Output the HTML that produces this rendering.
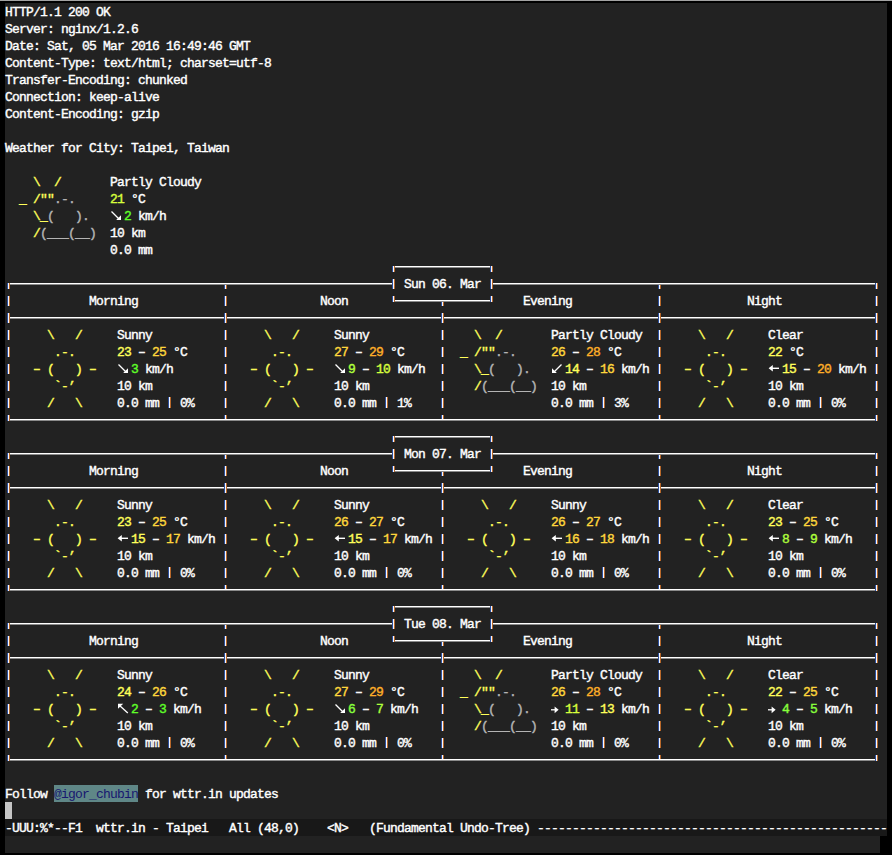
<!DOCTYPE html>
<html><head><meta charset="utf-8"><style>
html,body{margin:0;padding:0;background:#000;}
#t{position:relative;width:892px;height:855px;background:#000;overflow:hidden}
#bar{position:absolute;left:0;top:0;width:892px;height:1px;background:#a3a3a3}
#bg{position:absolute;left:5px;top:3px;width:882px;height:833px;background:#222222}
#mb{position:absolute;left:5px;top:836px;width:875px;height:17px;background:#222222}
#ml{position:absolute;left:5px;top:819px;width:882px;height:17px;background:#181818}
#cur{position:absolute;left:5px;top:802px;width:7px;height:17px;background:#c4c4c4}
#hl{position:absolute;left:54px;top:785px;width:84px;height:17px;background:#5f8787}
s{position:absolute;text-decoration:none;white-space:pre;font-family:"Liberation Mono",monospace;font-size:13px;letter-spacing:-0.8px;line-height:17px;color:#ffffff;margin-top:1px;-webkit-text-stroke-width:0.4px}
s.lk{color:#181870;-webkit-text-stroke-width:0}
i{position:absolute;display:block}
svg.ar{position:absolute}
</style></head><body><div id="t">
<div id="bar"></div><div id="bg"></div><div id="mb"></div><div id="ml"></div><div id="cur"></div><div id="hl"></div>
<i style="left:168px;top:397px;width:1px;height:11px;background:#2c4f9e"></i><i style="left:169px;top:397px;width:1px;height:11px;background:#f4f8ff"></i><i style="left:170px;top:397px;width:1px;height:11px;background:#b8682a"></i><i style="left:385px;top:397px;width:1px;height:11px;background:#2c4f9e"></i><i style="left:386px;top:397px;width:1px;height:11px;background:#f4f8ff"></i><i style="left:387px;top:397px;width:1px;height:11px;background:#b8682a"></i><i style="left:602px;top:397px;width:1px;height:11px;background:#2c4f9e"></i><i style="left:603px;top:397px;width:1px;height:11px;background:#f4f8ff"></i><i style="left:604px;top:397px;width:1px;height:11px;background:#b8682a"></i><i style="left:819px;top:397px;width:1px;height:11px;background:#2c4f9e"></i><i style="left:820px;top:397px;width:1px;height:11px;background:#f4f8ff"></i><i style="left:821px;top:397px;width:1px;height:11px;background:#b8682a"></i><i style="left:168px;top:567px;width:1px;height:11px;background:#2c4f9e"></i><i style="left:169px;top:567px;width:1px;height:11px;background:#f4f8ff"></i><i style="left:170px;top:567px;width:1px;height:11px;background:#b8682a"></i><i style="left:385px;top:567px;width:1px;height:11px;background:#2c4f9e"></i><i style="left:386px;top:567px;width:1px;height:11px;background:#f4f8ff"></i><i style="left:387px;top:567px;width:1px;height:11px;background:#b8682a"></i><i style="left:602px;top:567px;width:1px;height:11px;background:#2c4f9e"></i><i style="left:603px;top:567px;width:1px;height:11px;background:#f4f8ff"></i><i style="left:604px;top:567px;width:1px;height:11px;background:#b8682a"></i><i style="left:819px;top:567px;width:1px;height:11px;background:#2c4f9e"></i><i style="left:820px;top:567px;width:1px;height:11px;background:#f4f8ff"></i><i style="left:821px;top:567px;width:1px;height:11px;background:#b8682a"></i><i style="left:168px;top:737px;width:1px;height:11px;background:#2c4f9e"></i><i style="left:169px;top:737px;width:1px;height:11px;background:#f4f8ff"></i><i style="left:170px;top:737px;width:1px;height:11px;background:#b8682a"></i><i style="left:385px;top:737px;width:1px;height:11px;background:#2c4f9e"></i><i style="left:386px;top:737px;width:1px;height:11px;background:#f4f8ff"></i><i style="left:387px;top:737px;width:1px;height:11px;background:#b8682a"></i><i style="left:602px;top:737px;width:1px;height:11px;background:#2c4f9e"></i><i style="left:603px;top:737px;width:1px;height:11px;background:#f4f8ff"></i><i style="left:604px;top:737px;width:1px;height:11px;background:#b8682a"></i><i style="left:819px;top:737px;width:1px;height:11px;background:#2c4f9e"></i><i style="left:820px;top:737px;width:1px;height:11px;background:#f4f8ff"></i><i style="left:821px;top:737px;width:1px;height:11px;background:#b8682a"></i><i style="left:393px;top:266px;width:99px;height:1px;background:#ffffff"></i><i style="left:393px;top:267px;width:99px;height:1px;background:#8a8a8a"></i><i style="left:8px;top:283px;width:386px;height:1px;background:#ffffff"></i><i style="left:8px;top:284px;width:386px;height:1px;background:#8a8a8a"></i><i style="left:491px;top:283px;width:386px;height:1px;background:#ffffff"></i><i style="left:491px;top:284px;width:386px;height:1px;background:#8a8a8a"></i><i style="left:393px;top:300px;width:99px;height:1px;background:#ffffff"></i><i style="left:393px;top:301px;width:99px;height:1px;background:#8a8a8a"></i><i style="left:8px;top:317px;width:869px;height:1px;background:#ffffff"></i><i style="left:8px;top:318px;width:869px;height:1px;background:#8a8a8a"></i><i style="left:8px;top:419px;width:869px;height:1px;background:#ffffff"></i><i style="left:8px;top:420px;width:869px;height:1px;background:#8a8a8a"></i><i style="left:393px;top:436px;width:99px;height:1px;background:#ffffff"></i><i style="left:393px;top:437px;width:99px;height:1px;background:#8a8a8a"></i><i style="left:8px;top:453px;width:386px;height:1px;background:#ffffff"></i><i style="left:8px;top:454px;width:386px;height:1px;background:#8a8a8a"></i><i style="left:491px;top:453px;width:386px;height:1px;background:#ffffff"></i><i style="left:491px;top:454px;width:386px;height:1px;background:#8a8a8a"></i><i style="left:393px;top:470px;width:99px;height:1px;background:#ffffff"></i><i style="left:393px;top:471px;width:99px;height:1px;background:#8a8a8a"></i><i style="left:8px;top:487px;width:869px;height:1px;background:#ffffff"></i><i style="left:8px;top:488px;width:869px;height:1px;background:#8a8a8a"></i><i style="left:8px;top:589px;width:869px;height:1px;background:#ffffff"></i><i style="left:8px;top:590px;width:869px;height:1px;background:#8a8a8a"></i><i style="left:393px;top:606px;width:99px;height:1px;background:#ffffff"></i><i style="left:393px;top:607px;width:99px;height:1px;background:#8a8a8a"></i><i style="left:8px;top:623px;width:386px;height:1px;background:#ffffff"></i><i style="left:8px;top:624px;width:386px;height:1px;background:#8a8a8a"></i><i style="left:491px;top:623px;width:386px;height:1px;background:#ffffff"></i><i style="left:491px;top:624px;width:386px;height:1px;background:#8a8a8a"></i><i style="left:393px;top:640px;width:99px;height:1px;background:#ffffff"></i><i style="left:393px;top:641px;width:99px;height:1px;background:#8a8a8a"></i><i style="left:8px;top:657px;width:869px;height:1px;background:#ffffff"></i><i style="left:8px;top:658px;width:869px;height:1px;background:#8a8a8a"></i><i style="left:8px;top:759px;width:869px;height:1px;background:#ffffff"></i><i style="left:8px;top:760px;width:869px;height:1px;background:#8a8a8a"></i><i style="left:392px;top:266px;width:1px;height:6px;background:#2c4f9e"></i><i style="left:393px;top:266px;width:1px;height:6px;background:#f4f8ff"></i><i style="left:394px;top:266px;width:1px;height:6px;background:#b8682a"></i><i style="left:490px;top:266px;width:1px;height:6px;background:#2c4f9e"></i><i style="left:491px;top:266px;width:1px;height:6px;background:#f4f8ff"></i><i style="left:492px;top:266px;width:1px;height:6px;background:#b8682a"></i><i style="left:7px;top:283px;width:1px;height:6px;background:#2c4f9e"></i><i style="left:8px;top:283px;width:1px;height:6px;background:#f4f8ff"></i><i style="left:9px;top:283px;width:1px;height:6px;background:#b8682a"></i><i style="left:224px;top:285px;width:1px;height:4px;background:#2c4f9e"></i><i style="left:225px;top:285px;width:1px;height:4px;background:#f4f8ff"></i><i style="left:226px;top:285px;width:1px;height:4px;background:#b8682a"></i><i style="left:392px;top:279px;width:1px;height:10px;background:#2c4f9e"></i><i style="left:393px;top:279px;width:1px;height:10px;background:#f4f8ff"></i><i style="left:394px;top:279px;width:1px;height:10px;background:#b8682a"></i><i style="left:490px;top:279px;width:1px;height:10px;background:#2c4f9e"></i><i style="left:491px;top:279px;width:1px;height:10px;background:#f4f8ff"></i><i style="left:492px;top:279px;width:1px;height:10px;background:#b8682a"></i><i style="left:658px;top:285px;width:1px;height:4px;background:#2c4f9e"></i><i style="left:659px;top:285px;width:1px;height:4px;background:#f4f8ff"></i><i style="left:660px;top:285px;width:1px;height:4px;background:#b8682a"></i><i style="left:875px;top:283px;width:1px;height:6px;background:#2c4f9e"></i><i style="left:876px;top:283px;width:1px;height:6px;background:#f4f8ff"></i><i style="left:877px;top:283px;width:1px;height:6px;background:#b8682a"></i><i style="left:7px;top:296px;width:1px;height:10px;background:#2c4f9e"></i><i style="left:8px;top:296px;width:1px;height:10px;background:#f4f8ff"></i><i style="left:9px;top:296px;width:1px;height:10px;background:#b8682a"></i><i style="left:224px;top:296px;width:1px;height:10px;background:#2c4f9e"></i><i style="left:225px;top:296px;width:1px;height:10px;background:#f4f8ff"></i><i style="left:226px;top:296px;width:1px;height:10px;background:#b8682a"></i><i style="left:392px;top:296px;width:1px;height:6px;background:#2c4f9e"></i><i style="left:393px;top:296px;width:1px;height:6px;background:#f4f8ff"></i><i style="left:394px;top:296px;width:1px;height:6px;background:#b8682a"></i><i style="left:441px;top:302px;width:1px;height:4px;background:#2c4f9e"></i><i style="left:442px;top:302px;width:1px;height:4px;background:#f4f8ff"></i><i style="left:443px;top:302px;width:1px;height:4px;background:#b8682a"></i><i style="left:490px;top:296px;width:1px;height:6px;background:#2c4f9e"></i><i style="left:491px;top:296px;width:1px;height:6px;background:#f4f8ff"></i><i style="left:492px;top:296px;width:1px;height:6px;background:#b8682a"></i><i style="left:658px;top:296px;width:1px;height:10px;background:#2c4f9e"></i><i style="left:659px;top:296px;width:1px;height:10px;background:#f4f8ff"></i><i style="left:660px;top:296px;width:1px;height:10px;background:#b8682a"></i><i style="left:875px;top:296px;width:1px;height:10px;background:#2c4f9e"></i><i style="left:876px;top:296px;width:1px;height:10px;background:#f4f8ff"></i><i style="left:877px;top:296px;width:1px;height:10px;background:#b8682a"></i><i style="left:7px;top:313px;width:1px;height:10px;background:#2c4f9e"></i><i style="left:8px;top:313px;width:1px;height:10px;background:#f4f8ff"></i><i style="left:9px;top:313px;width:1px;height:10px;background:#b8682a"></i><i style="left:224px;top:313px;width:1px;height:10px;background:#2c4f9e"></i><i style="left:225px;top:313px;width:1px;height:10px;background:#f4f8ff"></i><i style="left:226px;top:313px;width:1px;height:10px;background:#b8682a"></i><i style="left:441px;top:313px;width:1px;height:10px;background:#2c4f9e"></i><i style="left:442px;top:313px;width:1px;height:10px;background:#f4f8ff"></i><i style="left:443px;top:313px;width:1px;height:10px;background:#b8682a"></i><i style="left:658px;top:313px;width:1px;height:10px;background:#2c4f9e"></i><i style="left:659px;top:313px;width:1px;height:10px;background:#f4f8ff"></i><i style="left:660px;top:313px;width:1px;height:10px;background:#b8682a"></i><i style="left:875px;top:313px;width:1px;height:10px;background:#2c4f9e"></i><i style="left:876px;top:313px;width:1px;height:10px;background:#f4f8ff"></i><i style="left:877px;top:313px;width:1px;height:10px;background:#b8682a"></i><i style="left:7px;top:330px;width:1px;height:10px;background:#2c4f9e"></i><i style="left:8px;top:330px;width:1px;height:10px;background:#f4f8ff"></i><i style="left:9px;top:330px;width:1px;height:10px;background:#b8682a"></i><i style="left:224px;top:330px;width:1px;height:10px;background:#2c4f9e"></i><i style="left:225px;top:330px;width:1px;height:10px;background:#f4f8ff"></i><i style="left:226px;top:330px;width:1px;height:10px;background:#b8682a"></i><i style="left:441px;top:330px;width:1px;height:10px;background:#2c4f9e"></i><i style="left:442px;top:330px;width:1px;height:10px;background:#f4f8ff"></i><i style="left:443px;top:330px;width:1px;height:10px;background:#b8682a"></i><i style="left:658px;top:330px;width:1px;height:10px;background:#2c4f9e"></i><i style="left:659px;top:330px;width:1px;height:10px;background:#f4f8ff"></i><i style="left:660px;top:330px;width:1px;height:10px;background:#b8682a"></i><i style="left:875px;top:330px;width:1px;height:10px;background:#2c4f9e"></i><i style="left:876px;top:330px;width:1px;height:10px;background:#f4f8ff"></i><i style="left:877px;top:330px;width:1px;height:10px;background:#b8682a"></i><i style="left:7px;top:347px;width:1px;height:10px;background:#2c4f9e"></i><i style="left:8px;top:347px;width:1px;height:10px;background:#f4f8ff"></i><i style="left:9px;top:347px;width:1px;height:10px;background:#b8682a"></i><i style="left:224px;top:347px;width:1px;height:10px;background:#2c4f9e"></i><i style="left:225px;top:347px;width:1px;height:10px;background:#f4f8ff"></i><i style="left:226px;top:347px;width:1px;height:10px;background:#b8682a"></i><i style="left:441px;top:347px;width:1px;height:10px;background:#2c4f9e"></i><i style="left:442px;top:347px;width:1px;height:10px;background:#f4f8ff"></i><i style="left:443px;top:347px;width:1px;height:10px;background:#b8682a"></i><i style="left:658px;top:347px;width:1px;height:10px;background:#2c4f9e"></i><i style="left:659px;top:347px;width:1px;height:10px;background:#f4f8ff"></i><i style="left:660px;top:347px;width:1px;height:10px;background:#b8682a"></i><i style="left:875px;top:347px;width:1px;height:10px;background:#2c4f9e"></i><i style="left:876px;top:347px;width:1px;height:10px;background:#f4f8ff"></i><i style="left:877px;top:347px;width:1px;height:10px;background:#b8682a"></i><i style="left:7px;top:364px;width:1px;height:10px;background:#2c4f9e"></i><i style="left:8px;top:364px;width:1px;height:10px;background:#f4f8ff"></i><i style="left:9px;top:364px;width:1px;height:10px;background:#b8682a"></i><i style="left:224px;top:364px;width:1px;height:10px;background:#2c4f9e"></i><i style="left:225px;top:364px;width:1px;height:10px;background:#f4f8ff"></i><i style="left:226px;top:364px;width:1px;height:10px;background:#b8682a"></i><i style="left:441px;top:364px;width:1px;height:10px;background:#2c4f9e"></i><i style="left:442px;top:364px;width:1px;height:10px;background:#f4f8ff"></i><i style="left:443px;top:364px;width:1px;height:10px;background:#b8682a"></i><i style="left:658px;top:364px;width:1px;height:10px;background:#2c4f9e"></i><i style="left:659px;top:364px;width:1px;height:10px;background:#f4f8ff"></i><i style="left:660px;top:364px;width:1px;height:10px;background:#b8682a"></i><i style="left:875px;top:364px;width:1px;height:10px;background:#2c4f9e"></i><i style="left:876px;top:364px;width:1px;height:10px;background:#f4f8ff"></i><i style="left:877px;top:364px;width:1px;height:10px;background:#b8682a"></i><i style="left:7px;top:381px;width:1px;height:10px;background:#2c4f9e"></i><i style="left:8px;top:381px;width:1px;height:10px;background:#f4f8ff"></i><i style="left:9px;top:381px;width:1px;height:10px;background:#b8682a"></i><i style="left:224px;top:381px;width:1px;height:10px;background:#2c4f9e"></i><i style="left:225px;top:381px;width:1px;height:10px;background:#f4f8ff"></i><i style="left:226px;top:381px;width:1px;height:10px;background:#b8682a"></i><i style="left:441px;top:381px;width:1px;height:10px;background:#2c4f9e"></i><i style="left:442px;top:381px;width:1px;height:10px;background:#f4f8ff"></i><i style="left:443px;top:381px;width:1px;height:10px;background:#b8682a"></i><i style="left:658px;top:381px;width:1px;height:10px;background:#2c4f9e"></i><i style="left:659px;top:381px;width:1px;height:10px;background:#f4f8ff"></i><i style="left:660px;top:381px;width:1px;height:10px;background:#b8682a"></i><i style="left:875px;top:381px;width:1px;height:10px;background:#2c4f9e"></i><i style="left:876px;top:381px;width:1px;height:10px;background:#f4f8ff"></i><i style="left:877px;top:381px;width:1px;height:10px;background:#b8682a"></i><i style="left:7px;top:398px;width:1px;height:10px;background:#2c4f9e"></i><i style="left:8px;top:398px;width:1px;height:10px;background:#f4f8ff"></i><i style="left:9px;top:398px;width:1px;height:10px;background:#b8682a"></i><i style="left:224px;top:398px;width:1px;height:10px;background:#2c4f9e"></i><i style="left:225px;top:398px;width:1px;height:10px;background:#f4f8ff"></i><i style="left:226px;top:398px;width:1px;height:10px;background:#b8682a"></i><i style="left:441px;top:398px;width:1px;height:10px;background:#2c4f9e"></i><i style="left:442px;top:398px;width:1px;height:10px;background:#f4f8ff"></i><i style="left:443px;top:398px;width:1px;height:10px;background:#b8682a"></i><i style="left:658px;top:398px;width:1px;height:10px;background:#2c4f9e"></i><i style="left:659px;top:398px;width:1px;height:10px;background:#f4f8ff"></i><i style="left:660px;top:398px;width:1px;height:10px;background:#b8682a"></i><i style="left:875px;top:398px;width:1px;height:10px;background:#2c4f9e"></i><i style="left:876px;top:398px;width:1px;height:10px;background:#f4f8ff"></i><i style="left:877px;top:398px;width:1px;height:10px;background:#b8682a"></i><i style="left:7px;top:415px;width:1px;height:6px;background:#2c4f9e"></i><i style="left:8px;top:415px;width:1px;height:6px;background:#f4f8ff"></i><i style="left:9px;top:415px;width:1px;height:6px;background:#b8682a"></i><i style="left:224px;top:415px;width:1px;height:4px;background:#2c4f9e"></i><i style="left:225px;top:415px;width:1px;height:4px;background:#f4f8ff"></i><i style="left:226px;top:415px;width:1px;height:4px;background:#b8682a"></i><i style="left:441px;top:415px;width:1px;height:4px;background:#2c4f9e"></i><i style="left:442px;top:415px;width:1px;height:4px;background:#f4f8ff"></i><i style="left:443px;top:415px;width:1px;height:4px;background:#b8682a"></i><i style="left:658px;top:415px;width:1px;height:4px;background:#2c4f9e"></i><i style="left:659px;top:415px;width:1px;height:4px;background:#f4f8ff"></i><i style="left:660px;top:415px;width:1px;height:4px;background:#b8682a"></i><i style="left:875px;top:415px;width:1px;height:6px;background:#2c4f9e"></i><i style="left:876px;top:415px;width:1px;height:6px;background:#f4f8ff"></i><i style="left:877px;top:415px;width:1px;height:6px;background:#b8682a"></i><i style="left:392px;top:436px;width:1px;height:6px;background:#2c4f9e"></i><i style="left:393px;top:436px;width:1px;height:6px;background:#f4f8ff"></i><i style="left:394px;top:436px;width:1px;height:6px;background:#b8682a"></i><i style="left:490px;top:436px;width:1px;height:6px;background:#2c4f9e"></i><i style="left:491px;top:436px;width:1px;height:6px;background:#f4f8ff"></i><i style="left:492px;top:436px;width:1px;height:6px;background:#b8682a"></i><i style="left:7px;top:453px;width:1px;height:6px;background:#2c4f9e"></i><i style="left:8px;top:453px;width:1px;height:6px;background:#f4f8ff"></i><i style="left:9px;top:453px;width:1px;height:6px;background:#b8682a"></i><i style="left:224px;top:455px;width:1px;height:4px;background:#2c4f9e"></i><i style="left:225px;top:455px;width:1px;height:4px;background:#f4f8ff"></i><i style="left:226px;top:455px;width:1px;height:4px;background:#b8682a"></i><i style="left:392px;top:449px;width:1px;height:10px;background:#2c4f9e"></i><i style="left:393px;top:449px;width:1px;height:10px;background:#f4f8ff"></i><i style="left:394px;top:449px;width:1px;height:10px;background:#b8682a"></i><i style="left:490px;top:449px;width:1px;height:10px;background:#2c4f9e"></i><i style="left:491px;top:449px;width:1px;height:10px;background:#f4f8ff"></i><i style="left:492px;top:449px;width:1px;height:10px;background:#b8682a"></i><i style="left:658px;top:455px;width:1px;height:4px;background:#2c4f9e"></i><i style="left:659px;top:455px;width:1px;height:4px;background:#f4f8ff"></i><i style="left:660px;top:455px;width:1px;height:4px;background:#b8682a"></i><i style="left:875px;top:453px;width:1px;height:6px;background:#2c4f9e"></i><i style="left:876px;top:453px;width:1px;height:6px;background:#f4f8ff"></i><i style="left:877px;top:453px;width:1px;height:6px;background:#b8682a"></i><i style="left:7px;top:466px;width:1px;height:10px;background:#2c4f9e"></i><i style="left:8px;top:466px;width:1px;height:10px;background:#f4f8ff"></i><i style="left:9px;top:466px;width:1px;height:10px;background:#b8682a"></i><i style="left:224px;top:466px;width:1px;height:10px;background:#2c4f9e"></i><i style="left:225px;top:466px;width:1px;height:10px;background:#f4f8ff"></i><i style="left:226px;top:466px;width:1px;height:10px;background:#b8682a"></i><i style="left:392px;top:466px;width:1px;height:6px;background:#2c4f9e"></i><i style="left:393px;top:466px;width:1px;height:6px;background:#f4f8ff"></i><i style="left:394px;top:466px;width:1px;height:6px;background:#b8682a"></i><i style="left:441px;top:472px;width:1px;height:4px;background:#2c4f9e"></i><i style="left:442px;top:472px;width:1px;height:4px;background:#f4f8ff"></i><i style="left:443px;top:472px;width:1px;height:4px;background:#b8682a"></i><i style="left:490px;top:466px;width:1px;height:6px;background:#2c4f9e"></i><i style="left:491px;top:466px;width:1px;height:6px;background:#f4f8ff"></i><i style="left:492px;top:466px;width:1px;height:6px;background:#b8682a"></i><i style="left:658px;top:466px;width:1px;height:10px;background:#2c4f9e"></i><i style="left:659px;top:466px;width:1px;height:10px;background:#f4f8ff"></i><i style="left:660px;top:466px;width:1px;height:10px;background:#b8682a"></i><i style="left:875px;top:466px;width:1px;height:10px;background:#2c4f9e"></i><i style="left:876px;top:466px;width:1px;height:10px;background:#f4f8ff"></i><i style="left:877px;top:466px;width:1px;height:10px;background:#b8682a"></i><i style="left:7px;top:483px;width:1px;height:10px;background:#2c4f9e"></i><i style="left:8px;top:483px;width:1px;height:10px;background:#f4f8ff"></i><i style="left:9px;top:483px;width:1px;height:10px;background:#b8682a"></i><i style="left:224px;top:483px;width:1px;height:10px;background:#2c4f9e"></i><i style="left:225px;top:483px;width:1px;height:10px;background:#f4f8ff"></i><i style="left:226px;top:483px;width:1px;height:10px;background:#b8682a"></i><i style="left:441px;top:483px;width:1px;height:10px;background:#2c4f9e"></i><i style="left:442px;top:483px;width:1px;height:10px;background:#f4f8ff"></i><i style="left:443px;top:483px;width:1px;height:10px;background:#b8682a"></i><i style="left:658px;top:483px;width:1px;height:10px;background:#2c4f9e"></i><i style="left:659px;top:483px;width:1px;height:10px;background:#f4f8ff"></i><i style="left:660px;top:483px;width:1px;height:10px;background:#b8682a"></i><i style="left:875px;top:483px;width:1px;height:10px;background:#2c4f9e"></i><i style="left:876px;top:483px;width:1px;height:10px;background:#f4f8ff"></i><i style="left:877px;top:483px;width:1px;height:10px;background:#b8682a"></i><i style="left:7px;top:500px;width:1px;height:10px;background:#2c4f9e"></i><i style="left:8px;top:500px;width:1px;height:10px;background:#f4f8ff"></i><i style="left:9px;top:500px;width:1px;height:10px;background:#b8682a"></i><i style="left:224px;top:500px;width:1px;height:10px;background:#2c4f9e"></i><i style="left:225px;top:500px;width:1px;height:10px;background:#f4f8ff"></i><i style="left:226px;top:500px;width:1px;height:10px;background:#b8682a"></i><i style="left:441px;top:500px;width:1px;height:10px;background:#2c4f9e"></i><i style="left:442px;top:500px;width:1px;height:10px;background:#f4f8ff"></i><i style="left:443px;top:500px;width:1px;height:10px;background:#b8682a"></i><i style="left:658px;top:500px;width:1px;height:10px;background:#2c4f9e"></i><i style="left:659px;top:500px;width:1px;height:10px;background:#f4f8ff"></i><i style="left:660px;top:500px;width:1px;height:10px;background:#b8682a"></i><i style="left:875px;top:500px;width:1px;height:10px;background:#2c4f9e"></i><i style="left:876px;top:500px;width:1px;height:10px;background:#f4f8ff"></i><i style="left:877px;top:500px;width:1px;height:10px;background:#b8682a"></i><i style="left:7px;top:517px;width:1px;height:10px;background:#2c4f9e"></i><i style="left:8px;top:517px;width:1px;height:10px;background:#f4f8ff"></i><i style="left:9px;top:517px;width:1px;height:10px;background:#b8682a"></i><i style="left:224px;top:517px;width:1px;height:10px;background:#2c4f9e"></i><i style="left:225px;top:517px;width:1px;height:10px;background:#f4f8ff"></i><i style="left:226px;top:517px;width:1px;height:10px;background:#b8682a"></i><i style="left:441px;top:517px;width:1px;height:10px;background:#2c4f9e"></i><i style="left:442px;top:517px;width:1px;height:10px;background:#f4f8ff"></i><i style="left:443px;top:517px;width:1px;height:10px;background:#b8682a"></i><i style="left:658px;top:517px;width:1px;height:10px;background:#2c4f9e"></i><i style="left:659px;top:517px;width:1px;height:10px;background:#f4f8ff"></i><i style="left:660px;top:517px;width:1px;height:10px;background:#b8682a"></i><i style="left:875px;top:517px;width:1px;height:10px;background:#2c4f9e"></i><i style="left:876px;top:517px;width:1px;height:10px;background:#f4f8ff"></i><i style="left:877px;top:517px;width:1px;height:10px;background:#b8682a"></i><i style="left:7px;top:534px;width:1px;height:10px;background:#2c4f9e"></i><i style="left:8px;top:534px;width:1px;height:10px;background:#f4f8ff"></i><i style="left:9px;top:534px;width:1px;height:10px;background:#b8682a"></i><i style="left:224px;top:534px;width:1px;height:10px;background:#2c4f9e"></i><i style="left:225px;top:534px;width:1px;height:10px;background:#f4f8ff"></i><i style="left:226px;top:534px;width:1px;height:10px;background:#b8682a"></i><i style="left:441px;top:534px;width:1px;height:10px;background:#2c4f9e"></i><i style="left:442px;top:534px;width:1px;height:10px;background:#f4f8ff"></i><i style="left:443px;top:534px;width:1px;height:10px;background:#b8682a"></i><i style="left:658px;top:534px;width:1px;height:10px;background:#2c4f9e"></i><i style="left:659px;top:534px;width:1px;height:10px;background:#f4f8ff"></i><i style="left:660px;top:534px;width:1px;height:10px;background:#b8682a"></i><i style="left:875px;top:534px;width:1px;height:10px;background:#2c4f9e"></i><i style="left:876px;top:534px;width:1px;height:10px;background:#f4f8ff"></i><i style="left:877px;top:534px;width:1px;height:10px;background:#b8682a"></i><i style="left:7px;top:551px;width:1px;height:10px;background:#2c4f9e"></i><i style="left:8px;top:551px;width:1px;height:10px;background:#f4f8ff"></i><i style="left:9px;top:551px;width:1px;height:10px;background:#b8682a"></i><i style="left:224px;top:551px;width:1px;height:10px;background:#2c4f9e"></i><i style="left:225px;top:551px;width:1px;height:10px;background:#f4f8ff"></i><i style="left:226px;top:551px;width:1px;height:10px;background:#b8682a"></i><i style="left:441px;top:551px;width:1px;height:10px;background:#2c4f9e"></i><i style="left:442px;top:551px;width:1px;height:10px;background:#f4f8ff"></i><i style="left:443px;top:551px;width:1px;height:10px;background:#b8682a"></i><i style="left:658px;top:551px;width:1px;height:10px;background:#2c4f9e"></i><i style="left:659px;top:551px;width:1px;height:10px;background:#f4f8ff"></i><i style="left:660px;top:551px;width:1px;height:10px;background:#b8682a"></i><i style="left:875px;top:551px;width:1px;height:10px;background:#2c4f9e"></i><i style="left:876px;top:551px;width:1px;height:10px;background:#f4f8ff"></i><i style="left:877px;top:551px;width:1px;height:10px;background:#b8682a"></i><i style="left:7px;top:568px;width:1px;height:10px;background:#2c4f9e"></i><i style="left:8px;top:568px;width:1px;height:10px;background:#f4f8ff"></i><i style="left:9px;top:568px;width:1px;height:10px;background:#b8682a"></i><i style="left:224px;top:568px;width:1px;height:10px;background:#2c4f9e"></i><i style="left:225px;top:568px;width:1px;height:10px;background:#f4f8ff"></i><i style="left:226px;top:568px;width:1px;height:10px;background:#b8682a"></i><i style="left:441px;top:568px;width:1px;height:10px;background:#2c4f9e"></i><i style="left:442px;top:568px;width:1px;height:10px;background:#f4f8ff"></i><i style="left:443px;top:568px;width:1px;height:10px;background:#b8682a"></i><i style="left:658px;top:568px;width:1px;height:10px;background:#2c4f9e"></i><i style="left:659px;top:568px;width:1px;height:10px;background:#f4f8ff"></i><i style="left:660px;top:568px;width:1px;height:10px;background:#b8682a"></i><i style="left:875px;top:568px;width:1px;height:10px;background:#2c4f9e"></i><i style="left:876px;top:568px;width:1px;height:10px;background:#f4f8ff"></i><i style="left:877px;top:568px;width:1px;height:10px;background:#b8682a"></i><i style="left:7px;top:585px;width:1px;height:6px;background:#2c4f9e"></i><i style="left:8px;top:585px;width:1px;height:6px;background:#f4f8ff"></i><i style="left:9px;top:585px;width:1px;height:6px;background:#b8682a"></i><i style="left:224px;top:585px;width:1px;height:4px;background:#2c4f9e"></i><i style="left:225px;top:585px;width:1px;height:4px;background:#f4f8ff"></i><i style="left:226px;top:585px;width:1px;height:4px;background:#b8682a"></i><i style="left:441px;top:585px;width:1px;height:4px;background:#2c4f9e"></i><i style="left:442px;top:585px;width:1px;height:4px;background:#f4f8ff"></i><i style="left:443px;top:585px;width:1px;height:4px;background:#b8682a"></i><i style="left:658px;top:585px;width:1px;height:4px;background:#2c4f9e"></i><i style="left:659px;top:585px;width:1px;height:4px;background:#f4f8ff"></i><i style="left:660px;top:585px;width:1px;height:4px;background:#b8682a"></i><i style="left:875px;top:585px;width:1px;height:6px;background:#2c4f9e"></i><i style="left:876px;top:585px;width:1px;height:6px;background:#f4f8ff"></i><i style="left:877px;top:585px;width:1px;height:6px;background:#b8682a"></i><i style="left:392px;top:606px;width:1px;height:6px;background:#2c4f9e"></i><i style="left:393px;top:606px;width:1px;height:6px;background:#f4f8ff"></i><i style="left:394px;top:606px;width:1px;height:6px;background:#b8682a"></i><i style="left:490px;top:606px;width:1px;height:6px;background:#2c4f9e"></i><i style="left:491px;top:606px;width:1px;height:6px;background:#f4f8ff"></i><i style="left:492px;top:606px;width:1px;height:6px;background:#b8682a"></i><i style="left:7px;top:623px;width:1px;height:6px;background:#2c4f9e"></i><i style="left:8px;top:623px;width:1px;height:6px;background:#f4f8ff"></i><i style="left:9px;top:623px;width:1px;height:6px;background:#b8682a"></i><i style="left:224px;top:625px;width:1px;height:4px;background:#2c4f9e"></i><i style="left:225px;top:625px;width:1px;height:4px;background:#f4f8ff"></i><i style="left:226px;top:625px;width:1px;height:4px;background:#b8682a"></i><i style="left:392px;top:619px;width:1px;height:10px;background:#2c4f9e"></i><i style="left:393px;top:619px;width:1px;height:10px;background:#f4f8ff"></i><i style="left:394px;top:619px;width:1px;height:10px;background:#b8682a"></i><i style="left:490px;top:619px;width:1px;height:10px;background:#2c4f9e"></i><i style="left:491px;top:619px;width:1px;height:10px;background:#f4f8ff"></i><i style="left:492px;top:619px;width:1px;height:10px;background:#b8682a"></i><i style="left:658px;top:625px;width:1px;height:4px;background:#2c4f9e"></i><i style="left:659px;top:625px;width:1px;height:4px;background:#f4f8ff"></i><i style="left:660px;top:625px;width:1px;height:4px;background:#b8682a"></i><i style="left:875px;top:623px;width:1px;height:6px;background:#2c4f9e"></i><i style="left:876px;top:623px;width:1px;height:6px;background:#f4f8ff"></i><i style="left:877px;top:623px;width:1px;height:6px;background:#b8682a"></i><i style="left:7px;top:636px;width:1px;height:10px;background:#2c4f9e"></i><i style="left:8px;top:636px;width:1px;height:10px;background:#f4f8ff"></i><i style="left:9px;top:636px;width:1px;height:10px;background:#b8682a"></i><i style="left:224px;top:636px;width:1px;height:10px;background:#2c4f9e"></i><i style="left:225px;top:636px;width:1px;height:10px;background:#f4f8ff"></i><i style="left:226px;top:636px;width:1px;height:10px;background:#b8682a"></i><i style="left:392px;top:636px;width:1px;height:6px;background:#2c4f9e"></i><i style="left:393px;top:636px;width:1px;height:6px;background:#f4f8ff"></i><i style="left:394px;top:636px;width:1px;height:6px;background:#b8682a"></i><i style="left:441px;top:642px;width:1px;height:4px;background:#2c4f9e"></i><i style="left:442px;top:642px;width:1px;height:4px;background:#f4f8ff"></i><i style="left:443px;top:642px;width:1px;height:4px;background:#b8682a"></i><i style="left:490px;top:636px;width:1px;height:6px;background:#2c4f9e"></i><i style="left:491px;top:636px;width:1px;height:6px;background:#f4f8ff"></i><i style="left:492px;top:636px;width:1px;height:6px;background:#b8682a"></i><i style="left:658px;top:636px;width:1px;height:10px;background:#2c4f9e"></i><i style="left:659px;top:636px;width:1px;height:10px;background:#f4f8ff"></i><i style="left:660px;top:636px;width:1px;height:10px;background:#b8682a"></i><i style="left:875px;top:636px;width:1px;height:10px;background:#2c4f9e"></i><i style="left:876px;top:636px;width:1px;height:10px;background:#f4f8ff"></i><i style="left:877px;top:636px;width:1px;height:10px;background:#b8682a"></i><i style="left:7px;top:653px;width:1px;height:10px;background:#2c4f9e"></i><i style="left:8px;top:653px;width:1px;height:10px;background:#f4f8ff"></i><i style="left:9px;top:653px;width:1px;height:10px;background:#b8682a"></i><i style="left:224px;top:653px;width:1px;height:10px;background:#2c4f9e"></i><i style="left:225px;top:653px;width:1px;height:10px;background:#f4f8ff"></i><i style="left:226px;top:653px;width:1px;height:10px;background:#b8682a"></i><i style="left:441px;top:653px;width:1px;height:10px;background:#2c4f9e"></i><i style="left:442px;top:653px;width:1px;height:10px;background:#f4f8ff"></i><i style="left:443px;top:653px;width:1px;height:10px;background:#b8682a"></i><i style="left:658px;top:653px;width:1px;height:10px;background:#2c4f9e"></i><i style="left:659px;top:653px;width:1px;height:10px;background:#f4f8ff"></i><i style="left:660px;top:653px;width:1px;height:10px;background:#b8682a"></i><i style="left:875px;top:653px;width:1px;height:10px;background:#2c4f9e"></i><i style="left:876px;top:653px;width:1px;height:10px;background:#f4f8ff"></i><i style="left:877px;top:653px;width:1px;height:10px;background:#b8682a"></i><i style="left:7px;top:670px;width:1px;height:10px;background:#2c4f9e"></i><i style="left:8px;top:670px;width:1px;height:10px;background:#f4f8ff"></i><i style="left:9px;top:670px;width:1px;height:10px;background:#b8682a"></i><i style="left:224px;top:670px;width:1px;height:10px;background:#2c4f9e"></i><i style="left:225px;top:670px;width:1px;height:10px;background:#f4f8ff"></i><i style="left:226px;top:670px;width:1px;height:10px;background:#b8682a"></i><i style="left:441px;top:670px;width:1px;height:10px;background:#2c4f9e"></i><i style="left:442px;top:670px;width:1px;height:10px;background:#f4f8ff"></i><i style="left:443px;top:670px;width:1px;height:10px;background:#b8682a"></i><i style="left:658px;top:670px;width:1px;height:10px;background:#2c4f9e"></i><i style="left:659px;top:670px;width:1px;height:10px;background:#f4f8ff"></i><i style="left:660px;top:670px;width:1px;height:10px;background:#b8682a"></i><i style="left:875px;top:670px;width:1px;height:10px;background:#2c4f9e"></i><i style="left:876px;top:670px;width:1px;height:10px;background:#f4f8ff"></i><i style="left:877px;top:670px;width:1px;height:10px;background:#b8682a"></i><i style="left:7px;top:687px;width:1px;height:10px;background:#2c4f9e"></i><i style="left:8px;top:687px;width:1px;height:10px;background:#f4f8ff"></i><i style="left:9px;top:687px;width:1px;height:10px;background:#b8682a"></i><i style="left:224px;top:687px;width:1px;height:10px;background:#2c4f9e"></i><i style="left:225px;top:687px;width:1px;height:10px;background:#f4f8ff"></i><i style="left:226px;top:687px;width:1px;height:10px;background:#b8682a"></i><i style="left:441px;top:687px;width:1px;height:10px;background:#2c4f9e"></i><i style="left:442px;top:687px;width:1px;height:10px;background:#f4f8ff"></i><i style="left:443px;top:687px;width:1px;height:10px;background:#b8682a"></i><i style="left:658px;top:687px;width:1px;height:10px;background:#2c4f9e"></i><i style="left:659px;top:687px;width:1px;height:10px;background:#f4f8ff"></i><i style="left:660px;top:687px;width:1px;height:10px;background:#b8682a"></i><i style="left:875px;top:687px;width:1px;height:10px;background:#2c4f9e"></i><i style="left:876px;top:687px;width:1px;height:10px;background:#f4f8ff"></i><i style="left:877px;top:687px;width:1px;height:10px;background:#b8682a"></i><i style="left:7px;top:704px;width:1px;height:10px;background:#2c4f9e"></i><i style="left:8px;top:704px;width:1px;height:10px;background:#f4f8ff"></i><i style="left:9px;top:704px;width:1px;height:10px;background:#b8682a"></i><i style="left:224px;top:704px;width:1px;height:10px;background:#2c4f9e"></i><i style="left:225px;top:704px;width:1px;height:10px;background:#f4f8ff"></i><i style="left:226px;top:704px;width:1px;height:10px;background:#b8682a"></i><i style="left:441px;top:704px;width:1px;height:10px;background:#2c4f9e"></i><i style="left:442px;top:704px;width:1px;height:10px;background:#f4f8ff"></i><i style="left:443px;top:704px;width:1px;height:10px;background:#b8682a"></i><i style="left:658px;top:704px;width:1px;height:10px;background:#2c4f9e"></i><i style="left:659px;top:704px;width:1px;height:10px;background:#f4f8ff"></i><i style="left:660px;top:704px;width:1px;height:10px;background:#b8682a"></i><i style="left:875px;top:704px;width:1px;height:10px;background:#2c4f9e"></i><i style="left:876px;top:704px;width:1px;height:10px;background:#f4f8ff"></i><i style="left:877px;top:704px;width:1px;height:10px;background:#b8682a"></i><i style="left:7px;top:721px;width:1px;height:10px;background:#2c4f9e"></i><i style="left:8px;top:721px;width:1px;height:10px;background:#f4f8ff"></i><i style="left:9px;top:721px;width:1px;height:10px;background:#b8682a"></i><i style="left:224px;top:721px;width:1px;height:10px;background:#2c4f9e"></i><i style="left:225px;top:721px;width:1px;height:10px;background:#f4f8ff"></i><i style="left:226px;top:721px;width:1px;height:10px;background:#b8682a"></i><i style="left:441px;top:721px;width:1px;height:10px;background:#2c4f9e"></i><i style="left:442px;top:721px;width:1px;height:10px;background:#f4f8ff"></i><i style="left:443px;top:721px;width:1px;height:10px;background:#b8682a"></i><i style="left:658px;top:721px;width:1px;height:10px;background:#2c4f9e"></i><i style="left:659px;top:721px;width:1px;height:10px;background:#f4f8ff"></i><i style="left:660px;top:721px;width:1px;height:10px;background:#b8682a"></i><i style="left:875px;top:721px;width:1px;height:10px;background:#2c4f9e"></i><i style="left:876px;top:721px;width:1px;height:10px;background:#f4f8ff"></i><i style="left:877px;top:721px;width:1px;height:10px;background:#b8682a"></i><i style="left:7px;top:738px;width:1px;height:10px;background:#2c4f9e"></i><i style="left:8px;top:738px;width:1px;height:10px;background:#f4f8ff"></i><i style="left:9px;top:738px;width:1px;height:10px;background:#b8682a"></i><i style="left:224px;top:738px;width:1px;height:10px;background:#2c4f9e"></i><i style="left:225px;top:738px;width:1px;height:10px;background:#f4f8ff"></i><i style="left:226px;top:738px;width:1px;height:10px;background:#b8682a"></i><i style="left:441px;top:738px;width:1px;height:10px;background:#2c4f9e"></i><i style="left:442px;top:738px;width:1px;height:10px;background:#f4f8ff"></i><i style="left:443px;top:738px;width:1px;height:10px;background:#b8682a"></i><i style="left:658px;top:738px;width:1px;height:10px;background:#2c4f9e"></i><i style="left:659px;top:738px;width:1px;height:10px;background:#f4f8ff"></i><i style="left:660px;top:738px;width:1px;height:10px;background:#b8682a"></i><i style="left:875px;top:738px;width:1px;height:10px;background:#2c4f9e"></i><i style="left:876px;top:738px;width:1px;height:10px;background:#f4f8ff"></i><i style="left:877px;top:738px;width:1px;height:10px;background:#b8682a"></i><i style="left:7px;top:755px;width:1px;height:6px;background:#2c4f9e"></i><i style="left:8px;top:755px;width:1px;height:6px;background:#f4f8ff"></i><i style="left:9px;top:755px;width:1px;height:6px;background:#b8682a"></i><i style="left:224px;top:755px;width:1px;height:4px;background:#2c4f9e"></i><i style="left:225px;top:755px;width:1px;height:4px;background:#f4f8ff"></i><i style="left:226px;top:755px;width:1px;height:4px;background:#b8682a"></i><i style="left:441px;top:755px;width:1px;height:4px;background:#2c4f9e"></i><i style="left:442px;top:755px;width:1px;height:4px;background:#f4f8ff"></i><i style="left:443px;top:755px;width:1px;height:4px;background:#b8682a"></i><i style="left:658px;top:755px;width:1px;height:4px;background:#2c4f9e"></i><i style="left:659px;top:755px;width:1px;height:4px;background:#f4f8ff"></i><i style="left:660px;top:755px;width:1px;height:4px;background:#b8682a"></i><i style="left:875px;top:755px;width:1px;height:6px;background:#2c4f9e"></i><i style="left:876px;top:755px;width:1px;height:6px;background:#f4f8ff"></i><i style="left:877px;top:755px;width:1px;height:6px;background:#b8682a"></i>
<s style="left:5px;top:3px">HTTP/1.1 200 OK</s><s style="left:5px;top:20px">Server: nginx/1.2.6</s><s style="left:5px;top:37px">Date: Sat, 05 Mar 2016 16:49:46 GMT</s><s style="left:5px;top:54px">Content-Type: text/html; charset=utf-8</s><s style="left:5px;top:71px">Transfer-Encoding: chunked</s><s style="left:5px;top:88px">Connection: keep-alive</s><s style="left:5px;top:105px">Content-Encoding: gzip</s><s style="left:5px;top:139px">Weather for City: Taipei, Taiwan</s><s style="left:33px;top:173px;color:#ffff5a">\</s><s style="left:54px;top:173px;color:#ffff5a">/</s><s style="left:110px;top:173px">Partly Cloudy</s><s style="left:19px;top:190px;color:#ffff5a">_ /&quot;&quot;</s><s style="left:54px;top:190px;color:#b4b4b4">.-.</s><s style="left:110px;top:190px;color:#d7ff3c">21</s><s style="left:131px;top:190px">°C</s><s style="left:33px;top:207px;color:#ffff5a">\_</s><s style="left:47px;top:207px;color:#b4b4b4">(</s><s style="left:75px;top:207px;color:#b4b4b4">).</s><svg class="ar" style="left:110px;top:207px" width="14" height="17" viewBox="0 0 14 17"><path d="M1.5 4.5L9.5 12.5" stroke="#fff" stroke-width="1.3"/><path d="M11 8.2V13H6.2Z" fill="#fff"/></svg><s style="left:124px;top:207px;color:#5fff28">2</s><s style="left:138px;top:207px">km/h</s><s style="left:33px;top:224px;color:#ffff5a">/</s><s style="left:40px;top:224px;color:#b4b4b4">(___(__)</s><s style="left:110px;top:224px">10 km</s><s style="left:110px;top:241px">0.0 mm</s><s style="left:404px;top:275px">Sun 06. Mar </s><s style="left:89px;top:292px">Morning</s><s style="left:320px;top:292px">Noon</s><s style="left:523px;top:292px">Evening</s><s style="left:747px;top:292px">Night</s><s style="left:47px;top:326px;color:#ffff5a">\</s><s style="left:75px;top:326px;color:#ffff5a">/</s><s style="left:117px;top:326px">Sunny</s><s style="left:264px;top:326px;color:#ffff5a">\</s><s style="left:292px;top:326px;color:#ffff5a">/</s><s style="left:334px;top:326px">Sunny</s><s style="left:474px;top:326px;color:#ffff5a">\</s><s style="left:495px;top:326px;color:#ffff5a">/</s><s style="left:551px;top:326px">Partly Cloudy</s><s style="left:698px;top:326px;color:#ffff5a">\</s><s style="left:726px;top:326px;color:#ffff5a">/</s><s style="left:768px;top:326px">Clear</s><s style="left:54px;top:343px;color:#ffff5a">.-.</s><s style="left:117px;top:343px;color:#ffff5a">23</s><s style="left:138px;top:343px">– </s><s style="left:152px;top:343px;color:#ffd73c">25</s><s style="left:173px;top:343px">°C</s><s style="left:271px;top:343px;color:#ffff5a">.-.</s><s style="left:334px;top:343px;color:#ffd73c">27</s><s style="left:355px;top:343px">– </s><s style="left:369px;top:343px;color:#ffaf28">29</s><s style="left:390px;top:343px">°C</s><s style="left:460px;top:343px;color:#ffff5a">_ /&quot;&quot;</s><s style="left:495px;top:343px;color:#b4b4b4">.-.</s><s style="left:551px;top:343px;color:#ffd73c">26</s><s style="left:572px;top:343px">– </s><s style="left:586px;top:343px;color:#ffaf28">28</s><s style="left:607px;top:343px">°C</s><s style="left:705px;top:343px;color:#ffff5a">.-.</s><s style="left:768px;top:343px;color:#ffff5a">22</s><s style="left:789px;top:343px">°C</s><s style="left:33px;top:360px;color:#ffff5a">‒ (</s><s style="left:75px;top:360px;color:#ffff5a">) ‒</s><svg class="ar" style="left:117px;top:360px" width="14" height="17" viewBox="0 0 14 17"><path d="M1.5 4.5L9.5 12.5" stroke="#fff" stroke-width="1.3"/><path d="M11 8.2V13H6.2Z" fill="#fff"/></svg><s style="left:131px;top:360px;color:#5fff28">3</s><s style="left:145px;top:360px">km/h</s><s style="left:250px;top:360px;color:#ffff5a">‒ (</s><s style="left:292px;top:360px;color:#ffff5a">) ‒</s><svg class="ar" style="left:334px;top:360px" width="14" height="17" viewBox="0 0 14 17"><path d="M1.5 4.5L9.5 12.5" stroke="#fff" stroke-width="1.3"/><path d="M11 8.2V13H6.2Z" fill="#fff"/></svg><s style="left:348px;top:360px;color:#afff3c">9</s><s style="left:362px;top:360px">– </s><s style="left:376px;top:360px;color:#d7ff3c">10</s><s style="left:397px;top:360px">km/h</s><s style="left:474px;top:360px;color:#ffff5a">\_</s><s style="left:488px;top:360px;color:#b4b4b4">(</s><s style="left:516px;top:360px;color:#b4b4b4">).</s><svg class="ar" style="left:551px;top:360px" width="14" height="17" viewBox="0 0 14 17"><path d="M10.5 4.5L2.5 12.5" stroke="#fff" stroke-width="1.3"/><path d="M1 8.2V13H5.8Z" fill="#fff"/></svg><s style="left:565px;top:360px;color:#ffff5a">14</s><s style="left:586px;top:360px">– </s><s style="left:600px;top:360px;color:#ffd73c">16</s><s style="left:621px;top:360px">km/h </s><s style="left:684px;top:360px;color:#ffff5a">‒ (</s><s style="left:726px;top:360px;color:#ffff5a">) ‒</s><svg class="ar" style="left:768px;top:360px" width="14" height="17" viewBox="0 0 14 17"><path d="M2 8.3H11" stroke="#fff" stroke-width="1.4"/><path d="M0.6 8.3L4.8 5V11.6Z" fill="#fff"/></svg><s style="left:782px;top:360px;color:#ffff5a">15</s><s style="left:803px;top:360px">– </s><s style="left:817px;top:360px;color:#ffaf28">20</s><s style="left:838px;top:360px">km/h </s><s style="left:54px;top:377px;color:#ffff5a">`-’</s><s style="left:117px;top:377px">10 km</s><s style="left:271px;top:377px;color:#ffff5a">`-’</s><s style="left:334px;top:377px">10 km</s><s style="left:474px;top:377px;color:#ffff5a">/</s><s style="left:481px;top:377px;color:#b4b4b4">(___(__)</s><s style="left:551px;top:377px">10 km</s><s style="left:705px;top:377px;color:#ffff5a">`-’</s><s style="left:768px;top:377px">10 km</s><s style="left:47px;top:394px;color:#ffff5a">/</s><s style="left:75px;top:394px;color:#ffff5a">\</s><s style="left:117px;top:394px">0.0 mm </s><s style="left:180px;top:394px">0%</s><s style="left:264px;top:394px;color:#ffff5a">/</s><s style="left:292px;top:394px;color:#ffff5a">\</s><s style="left:334px;top:394px">0.0 mm </s><s style="left:397px;top:394px">1%</s><s style="left:551px;top:394px">0.0 mm </s><s style="left:614px;top:394px">3%</s><s style="left:698px;top:394px;color:#ffff5a">/</s><s style="left:726px;top:394px;color:#ffff5a">\</s><s style="left:768px;top:394px">0.0 mm </s><s style="left:831px;top:394px">0%</s><s style="left:404px;top:445px">Mon 07. Mar </s><s style="left:89px;top:462px">Morning</s><s style="left:320px;top:462px">Noon</s><s style="left:523px;top:462px">Evening</s><s style="left:747px;top:462px">Night</s><s style="left:47px;top:496px;color:#ffff5a">\</s><s style="left:75px;top:496px;color:#ffff5a">/</s><s style="left:117px;top:496px">Sunny</s><s style="left:264px;top:496px;color:#ffff5a">\</s><s style="left:292px;top:496px;color:#ffff5a">/</s><s style="left:334px;top:496px">Sunny</s><s style="left:481px;top:496px;color:#ffff5a">\</s><s style="left:509px;top:496px;color:#ffff5a">/</s><s style="left:551px;top:496px">Sunny</s><s style="left:698px;top:496px;color:#ffff5a">\</s><s style="left:726px;top:496px;color:#ffff5a">/</s><s style="left:768px;top:496px">Clear</s><s style="left:54px;top:513px;color:#ffff5a">.-.</s><s style="left:117px;top:513px;color:#ffff5a">23</s><s style="left:138px;top:513px">– </s><s style="left:152px;top:513px;color:#ffd73c">25</s><s style="left:173px;top:513px">°C</s><s style="left:271px;top:513px;color:#ffff5a">.-.</s><s style="left:334px;top:513px;color:#ffd73c">26</s><s style="left:355px;top:513px">– </s><s style="left:369px;top:513px;color:#ffd73c">27</s><s style="left:390px;top:513px">°C</s><s style="left:488px;top:513px;color:#ffff5a">.-.</s><s style="left:551px;top:513px;color:#ffd73c">26</s><s style="left:572px;top:513px">– </s><s style="left:586px;top:513px;color:#ffd73c">27</s><s style="left:607px;top:513px">°C</s><s style="left:705px;top:513px;color:#ffff5a">.-.</s><s style="left:768px;top:513px;color:#ffff5a">23</s><s style="left:789px;top:513px">– </s><s style="left:803px;top:513px;color:#ffd73c">25</s><s style="left:824px;top:513px">°C</s><s style="left:33px;top:530px;color:#ffff5a">‒ (</s><s style="left:75px;top:530px;color:#ffff5a">) ‒</s><svg class="ar" style="left:117px;top:530px" width="14" height="17" viewBox="0 0 14 17"><path d="M2 8.3H11" stroke="#fff" stroke-width="1.4"/><path d="M0.6 8.3L4.8 5V11.6Z" fill="#fff"/></svg><s style="left:131px;top:530px;color:#ffff5a">15</s><s style="left:152px;top:530px">– </s><s style="left:166px;top:530px;color:#ffd73c">17</s><s style="left:187px;top:530px">km/h </s><s style="left:250px;top:530px;color:#ffff5a">‒ (</s><s style="left:292px;top:530px;color:#ffff5a">) ‒</s><svg class="ar" style="left:334px;top:530px" width="14" height="17" viewBox="0 0 14 17"><path d="M2 8.3H11" stroke="#fff" stroke-width="1.4"/><path d="M0.6 8.3L4.8 5V11.6Z" fill="#fff"/></svg><s style="left:348px;top:530px;color:#ffff5a">15</s><s style="left:369px;top:530px">– </s><s style="left:383px;top:530px;color:#ffd73c">17</s><s style="left:404px;top:530px">km/h </s><s style="left:467px;top:530px;color:#ffff5a">‒ (</s><s style="left:509px;top:530px;color:#ffff5a">) ‒</s><svg class="ar" style="left:551px;top:530px" width="14" height="17" viewBox="0 0 14 17"><path d="M2 8.3H11" stroke="#fff" stroke-width="1.4"/><path d="M0.6 8.3L4.8 5V11.6Z" fill="#fff"/></svg><s style="left:565px;top:530px;color:#ffd73c">16</s><s style="left:586px;top:530px">– </s><s style="left:600px;top:530px;color:#ffd73c">18</s><s style="left:621px;top:530px">km/h </s><s style="left:684px;top:530px;color:#ffff5a">‒ (</s><s style="left:726px;top:530px;color:#ffff5a">) ‒</s><svg class="ar" style="left:768px;top:530px" width="14" height="17" viewBox="0 0 14 17"><path d="M2 8.3H11" stroke="#fff" stroke-width="1.4"/><path d="M0.6 8.3L4.8 5V11.6Z" fill="#fff"/></svg><s style="left:782px;top:530px;color:#afff3c">8</s><s style="left:796px;top:530px">– </s><s style="left:810px;top:530px;color:#afff3c">9</s><s style="left:824px;top:530px">km/h</s><s style="left:54px;top:547px;color:#ffff5a">`-’</s><s style="left:117px;top:547px">10 km</s><s style="left:271px;top:547px;color:#ffff5a">`-’</s><s style="left:334px;top:547px">10 km</s><s style="left:488px;top:547px;color:#ffff5a">`-’</s><s style="left:551px;top:547px">10 km</s><s style="left:705px;top:547px;color:#ffff5a">`-’</s><s style="left:768px;top:547px">10 km</s><s style="left:47px;top:564px;color:#ffff5a">/</s><s style="left:75px;top:564px;color:#ffff5a">\</s><s style="left:117px;top:564px">0.0 mm </s><s style="left:180px;top:564px">0%</s><s style="left:264px;top:564px;color:#ffff5a">/</s><s style="left:292px;top:564px;color:#ffff5a">\</s><s style="left:334px;top:564px">0.0 mm </s><s style="left:397px;top:564px">0%</s><s style="left:481px;top:564px;color:#ffff5a">/</s><s style="left:509px;top:564px;color:#ffff5a">\</s><s style="left:551px;top:564px">0.0 mm </s><s style="left:614px;top:564px">0%</s><s style="left:698px;top:564px;color:#ffff5a">/</s><s style="left:726px;top:564px;color:#ffff5a">\</s><s style="left:768px;top:564px">0.0 mm </s><s style="left:831px;top:564px">0%</s><s style="left:404px;top:615px">Tue 08. Mar </s><s style="left:89px;top:632px">Morning</s><s style="left:320px;top:632px">Noon</s><s style="left:523px;top:632px">Evening</s><s style="left:747px;top:632px">Night</s><s style="left:47px;top:666px;color:#ffff5a">\</s><s style="left:75px;top:666px;color:#ffff5a">/</s><s style="left:117px;top:666px">Sunny</s><s style="left:264px;top:666px;color:#ffff5a">\</s><s style="left:292px;top:666px;color:#ffff5a">/</s><s style="left:334px;top:666px">Sunny</s><s style="left:474px;top:666px;color:#ffff5a">\</s><s style="left:495px;top:666px;color:#ffff5a">/</s><s style="left:551px;top:666px">Partly Cloudy</s><s style="left:698px;top:666px;color:#ffff5a">\</s><s style="left:726px;top:666px;color:#ffff5a">/</s><s style="left:768px;top:666px">Clear</s><s style="left:54px;top:683px;color:#ffff5a">.-.</s><s style="left:117px;top:683px;color:#ffff5a">24</s><s style="left:138px;top:683px">– </s><s style="left:152px;top:683px;color:#ffd73c">26</s><s style="left:173px;top:683px">°C</s><s style="left:271px;top:683px;color:#ffff5a">.-.</s><s style="left:334px;top:683px;color:#ffd73c">27</s><s style="left:355px;top:683px">– </s><s style="left:369px;top:683px;color:#ffaf28">29</s><s style="left:390px;top:683px">°C</s><s style="left:460px;top:683px;color:#ffff5a">_ /&quot;&quot;</s><s style="left:495px;top:683px;color:#b4b4b4">.-.</s><s style="left:551px;top:683px;color:#ffd73c">26</s><s style="left:572px;top:683px">– </s><s style="left:586px;top:683px;color:#ffaf28">28</s><s style="left:607px;top:683px">°C</s><s style="left:705px;top:683px;color:#ffff5a">.-.</s><s style="left:768px;top:683px;color:#ffff5a">22</s><s style="left:789px;top:683px">– </s><s style="left:803px;top:683px;color:#ffd73c">25</s><s style="left:824px;top:683px">°C</s><s style="left:33px;top:700px;color:#ffff5a">‒ (</s><s style="left:75px;top:700px;color:#ffff5a">) ‒</s><svg class="ar" style="left:117px;top:700px" width="14" height="17" viewBox="0 0 14 17"><path d="M2 5L10.8 13" stroke="#fff" stroke-width="1.3"/><path d="M1 3.8H6.2L1 8.8Z" fill="#fff"/></svg><s style="left:131px;top:700px;color:#5fff28">2</s><s style="left:145px;top:700px">– </s><s style="left:159px;top:700px;color:#5fff28">3</s><s style="left:173px;top:700px">km/h</s><s style="left:250px;top:700px;color:#ffff5a">‒ (</s><s style="left:292px;top:700px;color:#ffff5a">) ‒</s><svg class="ar" style="left:334px;top:700px" width="14" height="17" viewBox="0 0 14 17"><path d="M1.5 4.5L9.5 12.5" stroke="#fff" stroke-width="1.3"/><path d="M11 8.2V13H6.2Z" fill="#fff"/></svg><s style="left:348px;top:700px;color:#87ff3c">6</s><s style="left:362px;top:700px">– </s><s style="left:376px;top:700px;color:#afff3c">7</s><s style="left:390px;top:700px">km/h</s><s style="left:474px;top:700px;color:#ffff5a">\_</s><s style="left:488px;top:700px;color:#b4b4b4">(</s><s style="left:516px;top:700px;color:#b4b4b4">).</s><svg class="ar" style="left:551px;top:700px" width="14" height="17" viewBox="0 0 14 17"><path d="M0 9.8H5" stroke="#fff" stroke-width="1.3"/><path d="M7.6 9.8L3.6 6.4V13.2Z" fill="#fff"/></svg><s style="left:565px;top:700px;color:#d7ff3c">11</s><s style="left:586px;top:700px">– </s><s style="left:600px;top:700px;color:#ffff5a">13</s><s style="left:621px;top:700px">km/h </s><s style="left:684px;top:700px;color:#ffff5a">‒ (</s><s style="left:726px;top:700px;color:#ffff5a">) ‒</s><svg class="ar" style="left:768px;top:700px" width="14" height="17" viewBox="0 0 14 17"><path d="M0 9.8H5" stroke="#fff" stroke-width="1.3"/><path d="M7.6 9.8L3.6 6.4V13.2Z" fill="#fff"/></svg><s style="left:782px;top:700px;color:#87ff3c">4</s><s style="left:796px;top:700px">– </s><s style="left:810px;top:700px;color:#87ff3c">5</s><s style="left:824px;top:700px">km/h</s><s style="left:54px;top:717px;color:#ffff5a">`-’</s><s style="left:117px;top:717px">10 km</s><s style="left:271px;top:717px;color:#ffff5a">`-’</s><s style="left:334px;top:717px">10 km</s><s style="left:474px;top:717px;color:#ffff5a">/</s><s style="left:481px;top:717px;color:#b4b4b4">(___(__)</s><s style="left:551px;top:717px">10 km</s><s style="left:705px;top:717px;color:#ffff5a">`-’</s><s style="left:768px;top:717px">10 km</s><s style="left:47px;top:734px;color:#ffff5a">/</s><s style="left:75px;top:734px;color:#ffff5a">\</s><s style="left:117px;top:734px">0.0 mm </s><s style="left:180px;top:734px">0%</s><s style="left:264px;top:734px;color:#ffff5a">/</s><s style="left:292px;top:734px;color:#ffff5a">\</s><s style="left:334px;top:734px">0.0 mm </s><s style="left:397px;top:734px">0%</s><s style="left:551px;top:734px">0.0 mm </s><s style="left:614px;top:734px">0%</s><s style="left:698px;top:734px;color:#ffff5a">/</s><s style="left:726px;top:734px;color:#ffff5a">\</s><s style="left:768px;top:734px">0.0 mm </s><s style="left:831px;top:734px">0%</s><s style="left:5px;top:785px">Follow </s><s class=lk style="left:54px;top:785px">@igor_chubin</s><s style="left:145px;top:785px">for wttr.in updates</s><s style="left:5px;top:819px">-UUU:%*--F1</s><s style="left:96px;top:819px">wttr.in - Taipei</s><s style="left:229px;top:819px">All (48,0)</s><s style="left:327px;top:819px">&lt;N&gt;</s><s style="left:369px;top:819px">(Fundamental Undo-Tree) --------------------------------------------------</s>
</div></body></html>
